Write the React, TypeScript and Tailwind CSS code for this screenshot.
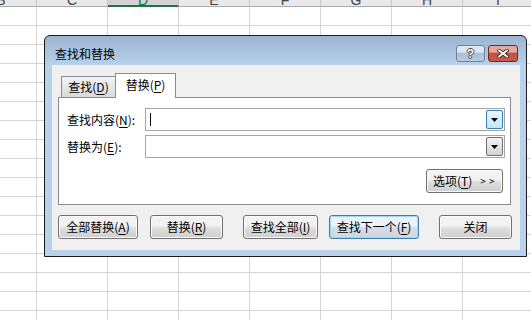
import type { ReactNode } from "react";

const font = { fontFamily: '"Noto Sans CJK SC", "Noto Sans", sans-serif' };

const columns = ["B", "C", "D", "E", "F", "G", "H", "I"];

function Sheet() {
  return (
    <div className="-ml-[34px] -mt-[14px] flex flex-col" style={{ fontFamily: '"Liberation Sans", Arial, sans-serif' }}>
      <div className="flex">
        {columns.map((c) => (
          <div
            key={c}
            className={
              c === "D"
                ? "box-border h-[21px] w-[71px] shrink-0 border-r border-b-2 border-r-[#c6c6c6] border-b-[#217346] bg-[#d3d3d3] pt-[7px] text-center text-[14px] leading-[14px] text-[#217346]"
                : "box-border h-[21px] w-[71px] shrink-0 border-r border-b border-[#c6c6c6] border-b-[#ababab] bg-[#e9e9e9] pt-[7px] text-center text-[14px] leading-[14px] text-[#444]"
            }
          >
            {c}
          </div>
        ))}
      </div>
      {Array.from({ length: 17 }).map((_, r) => (
        <div key={r} className="flex">
          {columns.map((c) => (
            <div key={c} className="box-border h-[19px] w-[71px] shrink-0 border-r border-b border-[#d4d4d4]" />
          ))}
        </div>
      ))}
    </div>
  );
}

function U({ children }: { children: ReactNode }) {
  return <span className="underline underline-offset-[2px]">{children}</span>;
}

function Arrow() {
  return (
    <svg width="7" height="4" viewBox="0 0 7 4">
      <polygon points="0,0 7,0 3.5,4" fill="#000" />
    </svg>
  );
}

function Combo({ active, caret }: { active?: boolean; caret?: boolean }) {
  return (
    <div className="box-border flex h-[23px] flex-1 border border-[#a5a5a5] bg-white p-px">
      <div className="flex flex-1 items-center pl-[3px]">
        {caret && <div className="h-[13px] w-px bg-black" />}
      </div>
      <div
        className={
          active
            ? "box-border flex w-[17px] items-center justify-center rounded-[2px] border border-[#3c7fb1] bg-[linear-gradient(#eaf6fd,#bee6fd)]"
            : "box-border flex w-[17px] items-center justify-center rounded-[2px] border border-[#707070] bg-[linear-gradient(#f2f2f2,#d4d4d4)]"
        }
      >
        <Arrow />
      </div>
    </div>
  );
}

function Btn({ w, ml, focus, children }: { w: string; ml: string; focus?: boolean; children: ReactNode }) {
  return (
    <div
      className={`${w} ${ml} box-border flex h-[24px] shrink-0 items-center justify-center rounded-[3px] border text-[12px] leading-[14px] ${
        focus
          ? "border-[#3c7fb1] bg-[linear-gradient(#ecf4f9_45%,#d5dde3_55%,#cfd8df)] shadow-[inset_0_0_0_1px_#9fd9f6]"
          : "border-[#707070] bg-[linear-gradient(#f2f2f2_45%,#dddddd_55%,#cfcfcf)] shadow-[inset_0_0_0_1px_#fcfcfc]"
      }`}
    >
      {children}
    </div>
  );
}

function Dialog() {
  return (
    <div className="absolute left-[44px] top-[35px] flex h-[222px] w-[483px] flex-col rounded-t-[6px] border border-[#1b1b1b] bg-[linear-gradient(#9bb5d1,#b9d1ea_30px,#b9d1ea)]">
      <div className="flex h-[29px] shrink-0 items-start justify-between pl-[10px] pr-[8px]">
        <div className="pt-[11px] text-[12px] leading-[14px] text-black">查找和替换</div>
        <div className="flex gap-[3px] pt-[9px]">
          <div className="box-border flex h-[17px] w-[29px] items-center justify-center rounded-[3px] border border-[#6c84a4] bg-[linear-gradient(#dce7f3_40%,#a9bfd8_50%,#b7cde4)]">
            <span className="text-[12px] font-bold leading-[12px] text-white [text-shadow:1px_0_0_#444,-1px_0_0_#444,0_1px_0_#444,0_-1px_0_#444]" style={{ fontFamily: '"Liberation Sans", sans-serif' }}>
              ?
            </span>
          </div>
          <div className="box-border flex h-[17px] w-[30px] items-center justify-center rounded-[3px] border border-[#6b2a22] bg-[linear-gradient(#e5a89d_40%,#c8503f_50%,#c5594a)]">
            <svg width="12" height="9" viewBox="0 0 12 9">
              <path d="M2 1.5 L10 7.5 M10 1.5 L2 7.5" stroke="#3a2a28" strokeWidth="3.6" strokeLinecap="square" />
              <path d="M2 1.5 L10 7.5 M10 1.5 L2 7.5" stroke="#fff" strokeWidth="1.8" strokeLinecap="square" />
            </svg>
          </div>
        </div>
      </div>
      <div className="flex flex-1 pb-[6px] pl-[7px] pr-[6px]">
        <div className="flex flex-1 flex-col bg-[#f0f0f0] text-black">
          <div className="ml-[9px] mt-[8px] flex h-[24px] items-end">
            <div className="box-border flex h-[21px] w-[54px] items-center justify-center border border-r-0 border-b-0 border-[#898c95] bg-[linear-gradient(#f3f3f3,#e6e6e6_50%,#d9d9d9)] text-[12px] leading-[14px]">
              查找(<U>D</U>)
            </div>
            <div className="relative z-10 -mb-px box-border flex h-[25px] w-[61px] items-start justify-center border border-b-0 border-[#898c95] bg-white pt-[4px] text-[12px] leading-[14px]">
              替换(<U>P</U>)
            </div>
          </div>
          <div className="ml-[6px] mr-[9px] box-border flex h-[108px] flex-col border border-[#898c95] bg-white pl-[8px] pr-[5px] pt-[10px]">
            <div className="flex items-center">
              <div className="w-[78px] text-[12px] leading-[14px]">
                查找内容(<U>N</U>):
              </div>
              <Combo active caret />
            </div>
            <div className="mt-[4px] flex items-center">
              <div className="w-[78px] text-[12px] leading-[14px]">
                替换为(<U>E</U>):
              </div>
              <Combo />
            </div>
            <div className="mr-[2px] mt-[11px] flex justify-end">
              <div className="box-border flex h-[24px] w-[77px] items-center rounded-[3px] border border-[#707070] bg-[linear-gradient(#f2f2f2_45%,#dddddd_55%,#cfcfcf)] pl-[6px] text-[12px] leading-[14px] shadow-[inset_0_0_0_1px_#fcfcfc]">
                选项(<U>T</U>)
                <span className="ml-[8px] text-[10px] tracking-[3px]">&gt;&gt;</span>
              </div>
            </div>
          </div>
          <div className="mt-[10px] flex">
            <Btn w="w-[80px]" ml="ml-[6px]">
              全部替换(<U>A</U>)
            </Btn>
            <Btn w="w-[73px]" ml="ml-[12px]">
              替换(<U>R</U>)
            </Btn>
            <Btn w="w-[75px]" ml="ml-[20px]">
              查找全部(<U>I</U>)
            </Btn>
            <Btn w="w-[90px]" ml="ml-[11px]" focus>
              查找下一个(<U>F</U>)
            </Btn>
            <Btn w="w-[73px]" ml="ml-[20px]">
              关闭
            </Btn>
          </div>
        </div>
      </div>
    </div>
  );
}

export default function App() {
  return (
    <div className="relative h-[320px] w-[531px] overflow-hidden bg-white" style={font}>
      <Sheet />
      <Dialog />
    </div>
  );
}
